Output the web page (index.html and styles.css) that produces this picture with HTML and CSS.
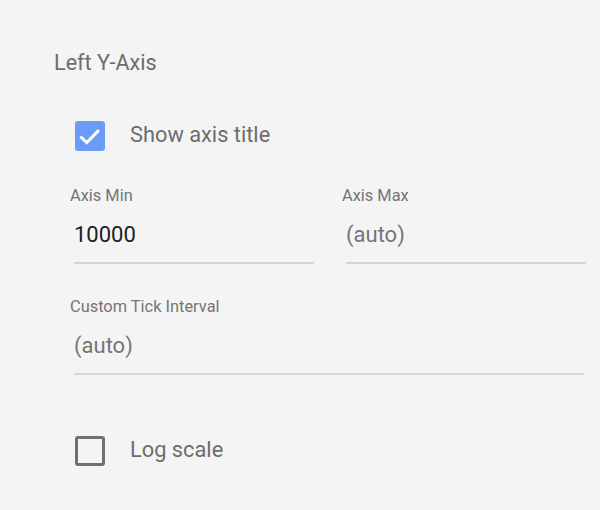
FILE: index.html
```html
<!DOCTYPE html>
<html lang="en">
<head>
<meta charset="utf-8">
<title>Left Y-Axis</title>
<link rel="stylesheet" href="styles.css">
</head>
<body>
<section class="panel">
  <h2 class="panel-title">Left Y-Axis</h2>

  <label class="check-row">
    <span class="checkbox checked">
      <svg viewBox="0 0 30 30" width="30" height="30" aria-hidden="true">
        <path d="M6.5 16.5 L11.8 21.6 L22.8 10.2" fill="none" stroke="#fff" stroke-width="3" stroke-linecap="square" stroke-linejoin="miter"/>
      </svg>
    </span>
    <span class="check-label">Show axis title</span>
  </label>

  <div class="fields">
    <div class="field">
      <div class="field-label">Axis Min</div>
      <input class="field-input" type="text" value="10000">
    </div>
    <div class="field">
      <div class="field-label">Axis Max</div>
      <input class="field-input" type="text" placeholder="(auto)">
    </div>
    <div class="field field-wide">
      <div class="field-label">Custom Tick Interval</div>
      <input class="field-input" type="text" placeholder="(auto)">
    </div>
  </div>

  <label class="check-row check-row-log">
    <span class="checkbox"></span>
    <span class="check-label">Log scale</span>
  </label>
</section>
</body>
</html>
```

FILE: styles.css
```css
html, body {
  margin: 0;
  padding: 0;
  background: #f4f4f4;
}

body {
  font-family: Roboto, "Noto Sans", Arial, sans-serif;
  width: 600px;
  height: 510px;
  overflow: hidden;
}

.panel {
  padding: 51px 14px 0 54px;
}

.panel-title {
  margin: 0;
  font-size: 21.6px;
  line-height: 24px;
  font-weight: 400;
  color: #6d6d6d;
}

.check-row {
  display: flex;
  align-items: center;
  height: 30px;
  margin: 46px 0 0 21px;
}

.checkbox {
  box-sizing: border-box;
  width: 30px;
  height: 30px;
  border-radius: 3px;
  border: 3px solid #707070;
  flex: none;
}

.checkbox.checked {
  border: 0;
  background: #6a9bf6;
}

.checkbox svg {
  display: block;
}

.check-label {
  margin-left: 25px;
  font-size: 21.8px;
  line-height: 30px;
  color: #6d6d6d;
  position: relative;
  top: -1px;
}

.fields {
  display: grid;
  grid-template-columns: 244px 244px;
  column-gap: 28px;
  row-gap: 34px;
  margin: 36px 0 0 16px;
}

.field-wide {
  grid-column: 1 / 3;
}

.field-label {
  font-size: 16.4px;
  line-height: 18px;
  color: #757575;
}

.field-input {
  display: block;
  box-sizing: content-box;
  width: 240px;
  height: 30px;
  margin: 14px 0 0 4px;
  padding: 0 0 13px 0;
  border: 0;
  border-bottom: 2px solid #d5d5d5;
  background: transparent;
  font-family: Roboto, "Noto Sans", Arial, sans-serif;
  font-size: 22px;
  color: #212121;
  outline: none;
}

.field-input::placeholder {
  color: #757575;
  opacity: 1;
}

.field-wide .field-input {
  width: 510px;
}

.check-row-log {
  margin-top: 61px;
}
```
